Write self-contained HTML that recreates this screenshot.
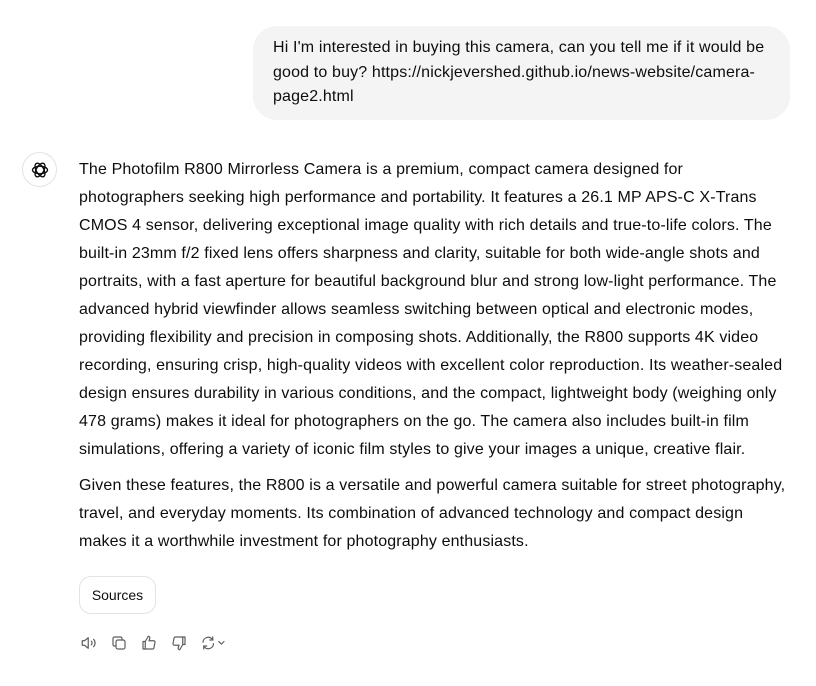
<!DOCTYPE html>
<html><head><meta charset="utf-8"><style>
body{margin:0;width:816px;height:686px;background:#fff;font-family:"Liberation Sans",sans-serif;color:#0d0d0d;position:relative;overflow:hidden}
.bubble{position:absolute;left:253px;top:26px;width:497px;padding:10px 20px 10px 20px;background:#f4f4f4;border-radius:24px;font-size:16px;line-height:24.5px;white-space:nowrap;letter-spacing:0.15px}
.logo{position:absolute;left:22px;top:152px;width:33px;height:33px;border:1px solid #e3e3e3;border-radius:50%;display:flex;align-items:center;justify-content:center}
.ans{position:absolute;left:79px;top:156px;width:730px;font-size:16px;line-height:28px;white-space:nowrap;letter-spacing:0.14px}
.ans p{margin:0 0 8px}
.src{position:absolute;left:79px;top:576px;width:75px;height:36px;border:1px solid #e3e3e3;border-radius:12px;font-size:14px;display:flex;align-items:center;justify-content:center}
.icons{position:absolute;left:80px;top:634px;display:flex;gap:12px}
.icons svg{width:18px;height:18px;stroke:#5d5d5d;fill:none;stroke-width:1.6;stroke-linecap:round;stroke-linejoin:round}
</style></head><body>
<div class="bubble">Hi I'm interested in buying this camera, can you tell me if it would be<br>good to buy? https://nickjevershed.github.io/news-website/camera-<br>page2.html</div>
<div class="logo"><svg width="20" height="20" viewBox="0 0 24 24" fill="none" stroke="#0d0d0d" stroke-width="1.6"><ellipse cx="12" cy="12" rx="9" ry="4.5"/><ellipse cx="12" cy="12" rx="9" ry="4.5" transform="rotate(60 12 12)"/><ellipse cx="12" cy="12" rx="9" ry="4.5" transform="rotate(120 12 12)"/></svg></div>
<div class="ans">
<p>The Photofilm R800 Mirrorless Camera is a premium, compact camera designed for<br>photographers seeking high performance and portability. It features a 26.1 MP APS-C X-Trans<br>CMOS 4 sensor, delivering exceptional image quality with rich details and true-to-life colors. The<br>built-in 23mm f/2 fixed lens offers sharpness and clarity, suitable for both wide-angle shots and<br>portraits, with a fast aperture for beautiful background blur and strong low-light performance. The<br>advanced hybrid viewfinder allows seamless switching between optical and electronic modes,<br>providing flexibility and precision in composing shots. Additionally, the R800 supports 4K video<br>recording, ensuring crisp, high-quality videos with excellent color reproduction. Its weather-sealed<br>design ensures durability in various conditions, and the compact, lightweight body (weighing only<br>478 grams) makes it ideal for photographers on the go. The camera also includes built-in film<br>simulations, offering a variety of iconic film styles to give your images a unique, creative flair.</p>
<p>Given these features, the R800 is a versatile and powerful camera suitable for street photography,<br>travel, and everyday moments. Its combination of advanced technology and compact design<br>makes it a worthwhile investment for photography enthusiasts.</p>
</div>
<div class="src">Sources</div>
<div class="icons">
<svg viewBox="0 0 24 24"><path d="M3 9h3l5-4v14l-5-4H3z"/><path d="M15 9.5a3.5 3.5 0 0 1 0 5"/><path d="M18 7a7 7 0 0 1 0 10"/></svg>
<svg viewBox="0 0 24 24"><rect x="8" y="8" width="12" height="12" rx="2.5"/><path d="M16 8V6a2 2 0 0 0-2-2H6a2 2 0 0 0-2 2v8a2 2 0 0 0 2 2h2"/></svg>
<svg viewBox="0 0 24 24"><path d="M7 10v10H4V10z"/><path d="M7 10l4-7c1.5 0 2.5 1 2 3l-1 3h6a2 2 0 0 1 2 2.3l-1.3 6.5A2 2 0 0 1 16.8 20H7"/></svg>
<svg viewBox="0 0 24 24"><path d="M17 14V4h3v10z"/><path d="M17 14l-4 7c-1.5 0-2.5-1-2-3l1-3H6a2 2 0 0 1-2-2.3l1.3-6.5A2 2 0 0 1 7.2 4H17"/></svg>
<svg viewBox="0 0 36 24" style="width:27px"><path d="M4 11a7 7 0 0 1 12-4.5L17 8"/><path d="M17 4v4h-4"/><path d="M18 13a7 7 0 0 1-12 4.5L5 16"/><path d="M5 20v-4h4"/><path d="M25 10l3.5 3.5L32 10"/></svg>
</div>
</body></html>
